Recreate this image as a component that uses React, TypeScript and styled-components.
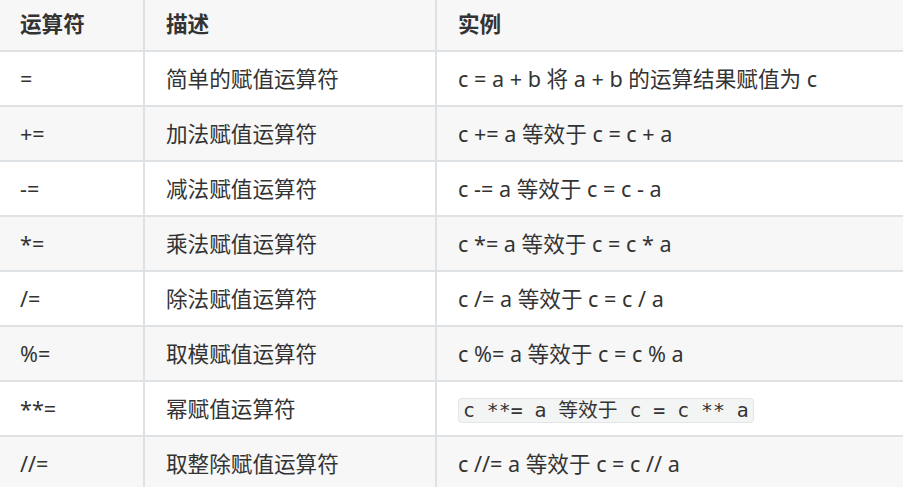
import React from 'react'
import styled, { createGlobalStyle } from 'styled-components'

const GlobalStyle = createGlobalStyle`
    html, body {
        margin: 0;
        padding: 0;
        background: #fff;
        overflow: hidden;
    }
    body {
        font-family: 'Noto Sans', 'Noto Sans CJK SC', sans-serif;
        color: #333;
    }
`

const Table = styled.table`
    border-collapse: separate;
    border-spacing: 0;
    table-layout: fixed;
    width: 1000px;
    margin: -5px 0 0 -3px;
    border-top: 2px solid #dfe2e5;
    border-left: 2px solid #dfe2e5;
    font-size: 21.6px;
`

const Row = styled.tr<{ $shaded: boolean }>`
    background: ${(p) => (p.$shaded ? '#f7f7f7' : '#fff')};
`

const Head = styled.th`
    box-sizing: border-box;
    text-align: left;
    font-weight: 700;
    padding: 12px 21px;
    line-height: 29px;
    border-right: 2px solid #dfe2e5;
    border-bottom: 2px solid #dfe2e5;
    white-space: nowrap;
`

const Cell = styled.td`
    box-sizing: border-box;
    padding: 12px 21px;
    line-height: 29px;
    border-right: 2px solid #dfe2e5;
    border-bottom: 2px solid #dfe2e5;
    white-space: nowrap;
    vertical-align: middle;
`

const Code = styled.code`
    font-family: 'DejaVu Sans Mono', 'Noto Sans CJK SC', monospace;
    font-size: 19.8px;
    line-height: 19px;
    padding: 0 4px;
    color: #333;
    background: #f3f4f4;
    border: 1px solid #e3e5e7;
    border-radius: 4px;
`

type Op = { op: string; desc: string; example: string; code?: boolean }

const rows: Op[] = [
    { op: '=', desc: '简单的赋值运算符', example: 'c = a + b 将 a + b 的运算结果赋值为 c' },
    { op: '+=', desc: '加法赋值运算符', example: 'c += a 等效于 c = c + a' },
    { op: '-=', desc: '减法赋值运算符', example: 'c -= a 等效于 c = c - a' },
    { op: '*=', desc: '乘法赋值运算符', example: 'c *= a 等效于 c = c * a' },
    { op: '/=', desc: '除法赋值运算符', example: 'c /= a 等效于 c = c / a' },
    { op: '%=', desc: '取模赋值运算符', example: 'c %= a 等效于 c = c % a' },
    { op: '**=', desc: '幂赋值运算符', example: 'c **= a 等效于 c = c ** a', code: true },
    { op: '//=', desc: '取整除赋值运算符', example: 'c //= a 等效于 c = c // a' },
]

export default function App() {
    return (
        <>
            <GlobalStyle />
            <Table>
                <colgroup>
                    <col style={{ width: 146 }} />
                    <col style={{ width: 292 }} />
                    <col />
                </colgroup>
                <thead>
                    <Row $shaded>
                        <Head>运算符</Head>
                        <Head>描述</Head>
                        <Head>实例</Head>
                    </Row>
                </thead>
                <tbody>
                    {rows.map((r, i) => (
                        <Row key={r.op} $shaded={i % 2 === 1}>
                            <Cell>{r.op}</Cell>
                            <Cell>{r.desc}</Cell>
                            <Cell>{r.code ? <Code>{r.example}</Code> : r.example}</Cell>
                        </Row>
                    ))}
                </tbody>
            </Table>
        </>
    )
}
